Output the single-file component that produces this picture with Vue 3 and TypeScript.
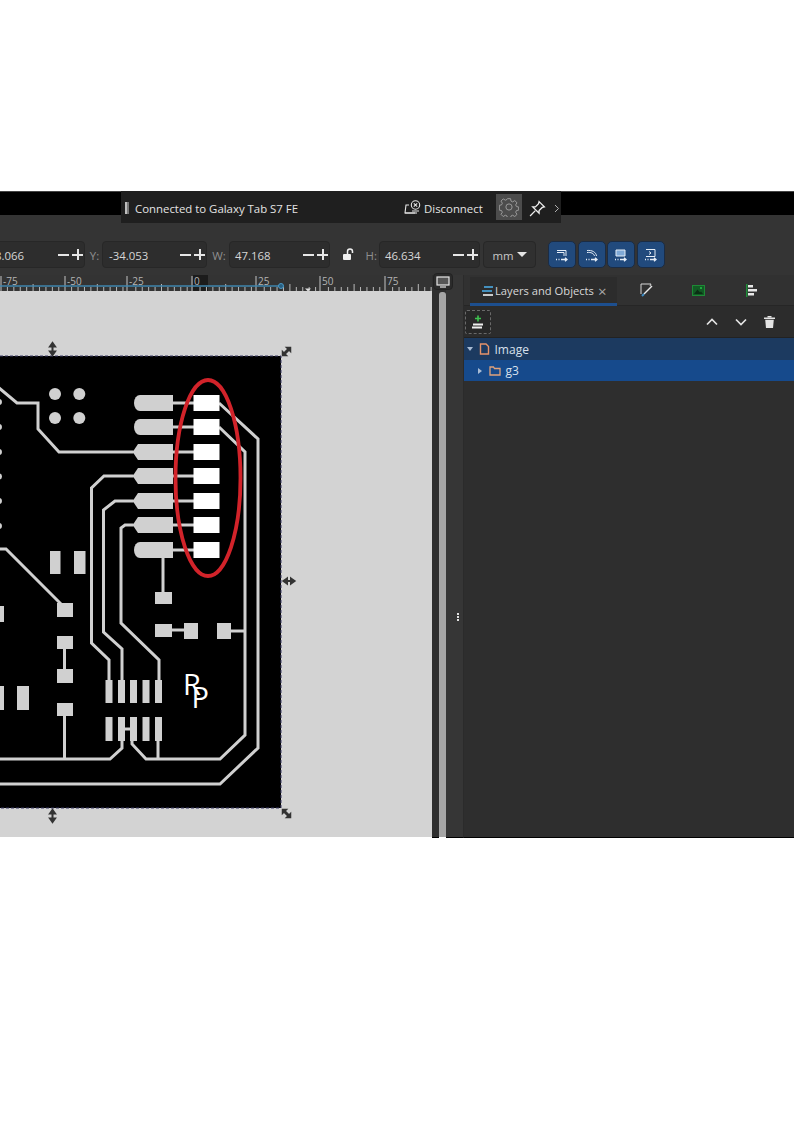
<script setup lang="ts">
const majors = [
  { x: 2, label: '-75' }, { x: 66, label: '-50' }, { x: 128, label: '-25' },
  { x: 193, label: '0' }, { x: 257, label: '25' }, { x: 321, label: '50' }, { x: 386, label: '75' },
]
const minors: { x: number; h: number }[] = []
for (let i = 0; i < 68; i++) {
  const x = 1 + i * 6.42
  if (i % 10 !== 0) minors.push({ x, h: i % 5 === 0 ? 7 : 4 })
}
const rows = [403, 427, 452, 476, 501, 525, 550]
const chamfered = [452, 476, 501, 525]
const fields = [
  { label: '', value: '8.066', cls: 'first' },
  { label: 'Y:', value: '-34.053', cls: 'y' },
  { label: 'W:', value: '47.168', cls: 'w' },
]
const tracks = [
  'M-2 387L17 403H38V429L59 452H134',
  'M134 476H104L91.5 488V643L109 660V680',
  'M134 501H115L103.5 510V632L122 649V680',
  'M134 525H125L121 528V623L159 660V680',
  'M163 558V592',
  'M219 403L258 439V748L220 784H-2',
  'M219 427L245 452V735L220 759H146L132 744V735',
  'M-2 759H110L122 748V735',
  'M158 741V759',
  'M64.5 649V669',
  'M64.5 716V759',
  'M-2 549H6L61 604',
  'M172 630H184',
  'M231 631H245',
  'M125 729H130',
]
const rects = [
  [105.5, 680, 7, 23], [118, 680, 7, 23], [130, 680, 7, 23], [142.5, 680, 7, 23], [155, 680, 7, 23],
  [105.5, 717, 7, 24], [118, 717, 7, 24], [130, 717, 7, 24], [142.5, 717, 7, 24], [155, 717, 7, 24],
  [57, 603, 16, 14], [57, 636, 16, 13], [57, 669, 16, 14], [57, 703, 16, 13],
  [50, 551, 10.5, 23], [74, 551, 11.5, 23], [17, 686, 12, 24], [-2, 686, 6, 24], [-2, 606, 6, 16],
  [155, 592, 17, 12], [155, 624, 17, 13], [184, 623, 14, 16], [217, 623, 14, 16],
]
function padPath(y: number): string {
  if (chamfered.includes(y)) {
    return `M138 ${y - 8}H173V${y + 8}H138L134 ${y + 2}V${y - 2}Z`
  }
  return `M140 ${y - 8}H173V${y + 8}H140A6 8 0 0 1 140 ${y - 8}Z`
}
</script>

<template>
  <div class="page">
    <div class="app">
      <div class="titlebar">
        <div class="cast">
          <span class="grip"></span>
          <span class="cast-text">Connected to Galaxy Tab S7 FE</span>
          <svg class="disc-ic" width="18" height="16" viewBox="0 0 18 16" fill="none" stroke="#e6e6e6" stroke-width="1.1">
            <path d="M5 5H2L1 13H11" />
            <path d="M1 13H13" />
            <circle cx="11.5" cy="5" r="4.2" />
            <path d="M9.8 3.3l3.4 3.4M13.2 3.3l-3.4 3.4M8 11h7" />
          </svg>
          <span class="disc-text">Disconnect</span>
          <span class="gear">
            <svg width="20" height="20" viewBox="0 0 18 18" fill="none" stroke="#9a9a9a" stroke-width=".9">
              <circle cx="9" cy="9" r="2.8" />
              <path d="M7.6 1.5h2.8l.4 2.2 1.5.7 1.9-1.2 2 2-1.2 1.9.7 1.5 2 .4v2.800l-2 .4-.7 1.500 1.200 1.900-2 2-1.900-1.200-1.500.7-.4 2H7.600l-.4-2-1.500-.7-1.900 1.200-2-2 1.200-1.900-.7-1.500-2-.4V7.500l2-.4.700-1.500-1.200-1.900 2-2 1.900 1.200 1.500-.7z" />
            </svg>
          </span>
          <svg class="pin" width="17" height="17" viewBox="0 0 16 16" fill="none" stroke="#f0f0f0" stroke-width="1.200">
            <path d="M9.500 1.500L14.500 6.500L12.500 7L9.500 10L9.500 12.500L3.500 6.500L6 6.500L9 3.500Z" />
            <path d="M6 10L1 15" />
          </svg>
          <svg class="more" width="6" height="9" viewBox="0 0 6 9" fill="none" stroke="#b0b0b0"><path d="M1 1l3.500 3.500L1 8" /></svg>
        </div>
      </div>

      <div class="toolbar">
        <template v-for="f in fields" :key="f.value">
          <span v-if="f.label" class="lbl">{{ f.label }}</span>
          <div class="field" :class="f.cls">
            <span class="val">{{ f.value }}</span>
            <span class="pm"><i class="minus"></i><i class="plus"></i></span>
          </div>
        </template>
        <svg class="lock" width="12" height="12" viewBox="0 0 12 12" fill="#f0f0f0">
          <rect x="0" y="6" width="8" height="6" rx="1" />
          <path d="M4.500 6V3.500a2.500 2.500 0 0 1 5 0V5" fill="none" stroke="#f0f0f0" stroke-width="1.500" />
        </svg>
        <span class="lbl h">H:</span>
        <div class="field hf">
          <span class="val">46.634</span>
          <span class="pm"><i class="minus"></i><i class="plus"></i></span>
        </div>
        <div class="unit"><span>mm</span><i class="caret"></i></div>
        <div class="blue-group">
          <span v-for="n in 4" :key="n" class="bbtn">
            <svg width="16" height="16" viewBox="0 0 16 16" fill="none" stroke="#e4ecf6" stroke-width="1">
              <path v-if="n === 1" d="M3 3.500H12V9M3 5.500H10V9" />
              <path v-else-if="n === 2" d="M3 3.500C8 3 12 5 12.500 9M3 5.500C7 5 10 6.500 10.500 9" />
              <path v-else-if="n === 3" d="M3 3H12V9H3z" fill="#7fa9d6" />
              <path v-else d="M3 2.500H12V9.500H3M6 4.500L8 6L6 7.500" />
              <path d="M2 12.500h1M4.500 12.500h1M7 12.500h5.500M11 10.800l2 1.700-2 1.700" stroke-width="1.300" />
            </svg>
          </span>
        </div>
      </div>

      <div class="workspace">
        <div class="canvas-col">
          <svg class="ruler" width="432" height="16" viewBox="0 275 432 16">
            <rect x="0" y="275" width="432" height="16" fill="#333333" />
            <rect x="193" y="275" width="15" height="16" fill="#1c1c1c" />
            <g v-for="m in minors" :key="m.x">
              <line :x1="m.x" :x2="m.x" :y1="291" :y2="291 - m.h" stroke="#b9b9b9" stroke-width="1" />
            </g>
            <g v-for="m in majors" :key="m.label">
              <line :x1="m.x - 1" :x2="m.x - 1" y1="291" y2="276" stroke="#c4c4c4" stroke-width="1" />
              <text :x="m.x + 1" y="285" class="ruler-text">{{ m.label }}</text>
            </g>
            <line x1="0" x2="281" y1="286" y2="286" stroke="#3f86ae" stroke-width="1.500" />
            <circle cx="281" cy="286" r="2.500" fill="#2a5f80" stroke="#4a9ac8" />
            <path d="M305 288.500h6l-3 3z" fill="#e0e0e0" />
          </svg>

          <svg class="board" width="432" height="546" viewBox="0 291 432 546">
            <rect x="0" y="291" width="432" height="546" fill="#d3d3d3" />
            <rect x="-4" y="356" width="285" height="452" fill="#000" />
            <path d="M0 356H281V808H0" fill="none" stroke="#3c3c66" stroke-width="1" stroke-dasharray="3 2" />
            <g fill="#d0d0d0">
              <circle cx="55" cy="394" r="6" /><circle cx="79.300" cy="394" r="6" />
              <circle cx="55" cy="418" r="6" /><circle cx="79.300" cy="418" r="6" />
              <circle v-for="y in [402, 427, 452, 476.500, 501, 526]" :key="y" cx="-1" :cy="y" r="3" />
              <rect v-for="(r, i) in rects" :key="i" :x="r[0]" :y="r[1]" :width="r[2]" :height="r[3]" />
            </g>
            <g fill="none" stroke="#d0d0d0" stroke-width="3">
              <path v-for="t in tracks" :key="t" :d="t" />
              <path v-for="y in rows" :key="y" :d="`M172 ${y}H194`" />
            </g>
            <g v-for="y in rows" :key="y">
              <path :d="padPath(y)" fill="#d0d0d0" />
              <rect x="193.500" :y="y - 8" width="26" height="16" fill="#fff" />
            </g>
            <text x="183" y="695" class="rp">R</text>
            <text x="191.500" y="708" class="rp">P</text>
            <ellipse cx="208" cy="478" rx="32.500" ry="98" fill="none" stroke="#d2232a" stroke-width="3.800" />
            <g fill="#333" stroke="#333">
              <path d="M52.500 344v10M50 346.500l2.500-3.500 2.500 3.500zM50 351.500l2.500 3.500 2.500-3.500z" stroke-width="2" />
              <path d="M52.500 811v10M50 813.500l2.500-3.500 2.500 3.500zM50 818.500l2.500 3.500 2.500-3.500z" stroke-width="2" />
              <path d="M284 581h10M287 578.500l-3.500 2.500 3.500 2.500zM291 578.500l3.500 2.500-3.500 2.500z" stroke-width="2" />
              <path d="M283.500 354.500l6-6" stroke-width="3" />
              <path d="M286.500 347.500h4v4zM282.500 351.500v4h4z" stroke-width="1.500" />
              <path d="M283.500 810.500l6 6" stroke-width="3" />
              <path d="M286.500 817.500h4v-4zM282.500 813.500v-4h4z" stroke-width="1.500" />
            </g>
          </svg>
        </div>

        <div class="vscroll">
          <span class="mon">
            <svg width="14" height="12" viewBox="0 0 14 12" fill="none" stroke="#e8e8e8" stroke-width="1.200">
              <rect x="1" y="1" width="12" height="8" fill="#555" />
              <path d="M4 11h6" />
            </svg>
          </span>
          <span class="thumb"></span>
        </div>

        <div class="splitter"><i></i><i></i><i></i></div>

        <div class="panel">
          <div class="tabs">
            <div class="tab active">
              <svg width="13" height="12" viewBox="0 0 13 12" fill="none" stroke-width="1.700">
                <path d="M3 2H12" stroke="#4aa3d8" />
                <path d="M1 6H11" stroke="#4aa3d8" />
                <path d="M2 10H12" stroke="#e8e8e8" />
              </svg>
              <span class="tab-text">Layers and Objects</span>
              <span class="close">×</span>
            </div>
            <div class="tab-ic one">
              <svg width="14" height="14" viewBox="0 0 14 14" fill="none">
                <path d="M1 1H11L10 3M1 1V11" stroke="#d8d8d8" />
                <path d="M12 3L4 11" stroke="#e8e8e8" stroke-width="1.500" />
                <path d="M2 13l2-2" stroke="#3f8fc8" stroke-width="2" />
              </svg>
            </div>
            <div class="tab-ic two">
              <svg width="13" height="11" viewBox="0 0 13 11">
                <rect x=".5" y=".5" width="12" height="10" fill="#125a24" stroke="#1d8a35" />
                <path d="M2 9L5.500 4.500L8 7.500L9 6.500L11 9z" fill="#0a2f14" />
                <circle cx="9" cy="3" r="1" fill="#27c24a" />
              </svg>
            </div>
            <div class="tab-ic three">
              <svg width="11" height="13" viewBox="0 0 11 13">
                <rect x="0" y="0" width="1.500" height="13" fill="#1f8f3a" />
                <rect x="2" y="1" width="5" height="2.500" fill="#e8e8e8" />
                <rect x="2" y="5" width="9" height="2.500" fill="#e8e8e8" />
                <rect x="2" y="9" width="6" height="2.500" fill="#e8e8e8" />
              </svg>
            </div>
          </div>

          <div class="actions">
            <span class="add">
              <svg width="16" height="16" viewBox="0 0 16 16" fill="none">
                <path d="M8 1.500v6M5 4.500h6" stroke="#3ec24f" stroke-width="1.600" />
                <path d="M3 10.500H13M2 13.500H12" stroke="#eee" stroke-width="1.800" />
              </svg>
            </span>
            <span class="acts-right">
              <svg width="12" height="8" viewBox="0 0 12 8" fill="none" stroke="#e4e4e4" stroke-width="1.700"><path d="M1 6.500L6 1.500L11 6.500" /></svg>
              <svg width="12" height="8" viewBox="0 0 12 8" fill="none" stroke="#e4e4e4" stroke-width="1.700"><path d="M1 1.500L6 6.500L11 1.500" /></svg>
              <svg width="11" height="12" viewBox="0 0 11 12" fill="#e4e4e4">
                <rect x="0" y="1.500" width="11" height="1.500" />
                <rect x="3.500" y="0" width="4" height="1.500" />
                <path d="M1.200 3.800H9.800L9 12H2z" />
              </svg>
            </span>
          </div>

          <div class="row image">
            <i class="tri down"></i>
            <svg class="doc" width="11" height="12" viewBox="0 0 11 12" fill="none" stroke="#e5936a" stroke-width="1.400">
              <path d="M1.500 1H7L9.500 3.500V11H1.500Z" />
            </svg>
            <span>Image</span>
          </div>
          <div class="row g3">
            <i class="tri right"></i>
            <svg class="folder" width="12" height="10" viewBox="0 0 12 10" fill="none" stroke="#e0a27c" stroke-width="1.300">
              <path d="M1 1H4.500L5.500 2.500H11V9H1Z" />
            </svg>
            <span>g3</span>
          </div>
        </div>
      </div>
    </div>
  </div>
</template>

<style>
html, body { margin: 0; background: #fff; }
</style>

<style scoped>
.page {
  width: 794px;
  height: 1123px;
  padding-top: 191px;
  box-sizing: border-box;
  background: #fff;
  overflow: hidden;
  font-family: "Open Sans", "Noto Sans", sans-serif;
}
.app {
  width: 794px;
  display: flex;
  flex-direction: column;
  position: relative;
}
.titlebar { height: 24px; background: #000; border-top: 1px solid #444; box-sizing: border-box; }
.cast {
  position: absolute;
  left: 121px;
  top: 0;
  width: 440px;
  height: 32px;
  box-sizing: border-box;
  padding-top: 2px;
  background: #1f1f1f;
  display: flex;
  align-items: center;
  color: #e4e4e4;
  font-size: 11.4px;
}
.grip { width: 4px; height: 12px; margin-left: 4px; background: #bdbdbd; border-right: 2px solid #777; box-sizing: border-box; }
.cast-text { margin-left: 6px; width: 269px; white-space: nowrap; }
.disc-text { margin-left: 2px; width: 72px; white-space: nowrap; }
.gear { width: 26px; height: 26px; margin-top: -2px; background: #4c4c4c; display: flex; align-items: center; justify-content: center; }
.pin { margin-left: 7px; }
.more { margin-left: 8px; }

.toolbar {
  height: 60px;
  background: #343434;
  box-sizing: border-box;
  padding-top: 26px;
  display: flex;
  align-items: flex-start;
  overflow: hidden;
}
.field {
  height: 27px;
  box-sizing: border-box;
  background: #2d2d2d;
  border: 1px solid #272727;
  border-radius: 4px;
  display: flex;
  align-items: center;
  justify-content: space-between;
  color: #d6d6d6;
  font-size: 11.4px;
  flex: none;
}
.field.first { width: 105px; margin-left: -20px; padding-left: 14px; }
.field.y { width: 105px; padding-left: 6px; }
.field.w { width: 101px; padding-left: 5px; }
.field.hf { width: 101px; padding-left: 5px; }
.val { white-space: nowrap; margin-top: 1px; }
.pm { display: flex; align-items: center; gap: 3px; padding-right: 1px; }
.minus, .plus { position: relative; width: 11px; height: 11px; display: block; }
.minus::before, .plus::before { content: ""; position: absolute; left: 0; right: 0; top: 5px; height: 1.500px; background: #e6e6e6; }
.plus::after { content: ""; position: absolute; top: 0; bottom: 0; left: 5px; width: 1.500px; background: #e6e6e6; }
.lbl { color: #8f8f8f; font-size: 11.4px; flex: none; margin-top: 7px; width: 22px; padding-left: 2px; text-align: center; box-sizing: border-box; }
.field.first + .lbl { width: 17px; }
.lbl.h { width: 24px; padding-left: 0; padding-right: 2px; text-align: right; }
.lock { margin: 7px 0 0 13px; flex: none; }
.unit {
  width: 53px;
  height: 27px;
  margin-left: 3px;
  box-sizing: border-box;
  background: #303030;
  border: 1px solid #272727;
  border-radius: 4px;
  display: flex;
  align-items: center;
  justify-content: center;
  gap: 3px;
  color: #c8c8c8;
  font-size: 11.4px;
  flex: none;
}
.unit span { margin-top: 1px; }
.caret { width: 0; height: 0; border-left: 5px solid transparent; border-right: 5px solid transparent; border-top: 5px solid #e4e4e4; }
.blue-group { display: flex; gap: 1.500px; margin-left: 12px; }
.bbtn {
  width: 28px;
  height: 27px;
  box-sizing: border-box;
  background: #214a7d;
  border: 1px solid #1b2c44;
  border-radius: 5px;
  display: flex;
  align-items: center;
  justify-content: center;
}

.workspace { display: flex; height: 563px; align-items: stretch; }
.canvas-col { width: 432px; flex: none; display: flex; flex-direction: column; height: 562px; }
.ruler, .board { display: block; flex: none; }
.ruler-text { font-family: "Open Sans", sans-serif; font-size: 10px; fill: #b4b4b4; }
.rp { font-family: "Open Sans", sans-serif; font-size: 29px; font-weight: 400; fill: #fff; }

.vscroll {
  width: 14px;
  flex: none;
  background: linear-gradient(#2e2e2e, #2e2e2e) 0 0 / 100% 562px no-repeat, linear-gradient(90deg, #000 7px, #fff 7px);
  box-sizing: border-box;
  position: relative;
  display: flex;
  justify-content: flex-end;
}
.mon {
  position: absolute;
  left: 1px;
  top: -2px;
  width: 20px;
  height: 17px;
  background: #2b2b2b;
  border: 1px solid #222;
  border-radius: 4px;
  box-sizing: border-box;
  display: flex;
  align-items: center;
  justify-content: center;
  z-index: 1;
}
.thumb { width: 7px; margin-top: 17px; margin-bottom: 1px; background: #a6a6a6; border-radius: 3px 3px 0 0; }
.splitter {
  width: 18px;
  flex: none;
  background: #363636;
  border-right: 1px solid #2b2b2b;
  border-bottom: 1px solid #000;
  display: flex;
  flex-direction: column;
  align-items: flex-end;
  justify-content: flex-start;
  padding: 338px 4px 0 0;
  box-sizing: border-box;
  gap: 1px;
}
.splitter i { width: 2px; height: 2px; background: #e0e0e0; display: block; }
.panel {
  flex: 1;
  background: #2e2e2e;
  border-bottom: 1px solid #000;
  display: flex;
  flex-direction: column;
  position: relative;
}
.tabs { height: 31px; display: flex; align-items: flex-start; box-sizing: border-box; padding-top: 2px; background: #313131; border-bottom: 1px solid #262626; }
.tab {
  width: 147px;
  height: 29px;
  box-sizing: border-box;
  margin-left: 6px;
  padding-top: 1px;
  background: #2c2c2c;
  border-bottom: 3px solid #1d4f8f;
  display: flex;
  align-items: center;
  padding-left: 11px;
  flex: none;
}
.tab-text { color: #d8d8d8; font-size: 11.2px; margin-left: 1px; white-space: nowrap; }
.close { color: #a8a8a8; font-size: 15px; margin-left: 4px; }
.tab-ic { height: 26px; display: flex; align-items: center; flex: none; }
.tab-ic.one { margin-left: 23px; }
.tab-ic.two { margin-left: 38px; }
.tab-ic.three { margin-left: 41px; }
.actions { height: 32px; display: flex; align-items: center; justify-content: space-between; background: #2c2c2c; padding: 0 19px 0 1px; box-sizing: border-box; border-bottom: 1px solid #222; }
.add {
  width: 26px;
  height: 24px;
  box-sizing: border-box;
  border: 1px dashed #6a6a6a;
  border-radius: 2px;
  background: #282828;
  display: flex;
  align-items: center;
  justify-content: center;
}
.acts-right { display: flex; align-items: center; gap: 17px; }
.row { display: flex; align-items: center; color: #d8e0ec; font-size: 12px; flex: none; }
.row.image { height: 22px; background: #1c3a60; padding-left: 3px; }
.row.g3 { height: 21px; background: #164a8c; padding-left: 14px; }
.tri { display: block; width: 0; height: 0; flex: none; }
.tri.down { border-left: 3.500px solid transparent; border-right: 3.500px solid transparent; border-top: 4.500px solid #a9bcd4; }
.tri.right { border-top: 3.500px solid transparent; border-bottom: 3.500px solid transparent; border-left: 4.500px solid #a9bcd4; }
.doc { margin-left: 5.500px; margin-right: 5px; }
.folder { margin-left: 6.500px; margin-right: 5px; }
</style>
